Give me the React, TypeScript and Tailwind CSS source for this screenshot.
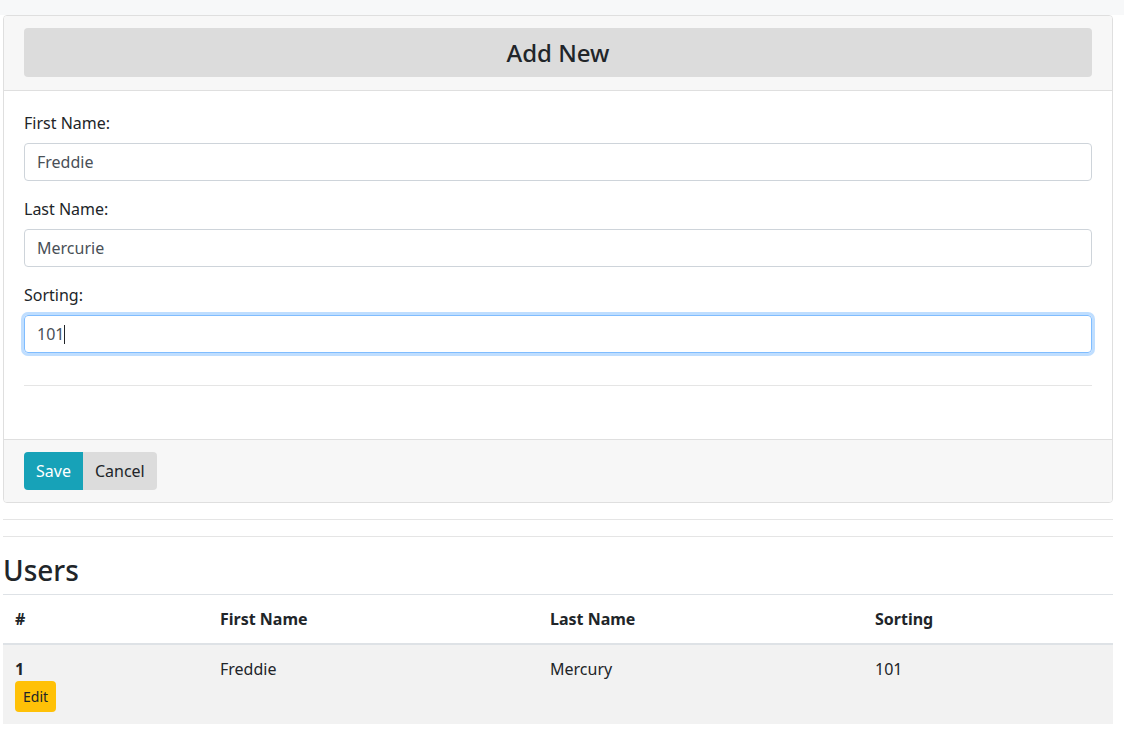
import React from 'react';

const font = { fontFamily: '"Noto Sans", "Open Sans", sans-serif' };

function Field({ label, value, focused }: { label: string; value: string; focused?: boolean }) {
  return (
    <div className="mb-4">
      <label className="block mb-2 text-[16px] leading-6 text-[#212529]">{label}</label>
      {focused ? (
        <div className="h-[38px] w-full rounded border border-[#80bdff] shadow-[0_0_0_3px_rgba(0,123,255,0.25)] px-3 flex items-center text-[16px] text-[#495057]">
          <span>{value}</span>
          <span className="inline-block w-px h-[19px] bg-[#212529]" />
        </div>
      ) : (
        <input
          readOnly
          defaultValue={value}
          className="block h-[38px] w-full rounded border border-[#ced4da] px-3 text-[16px] text-[#495057] outline-none"
        />
      )}
    </div>
  );
}

export default function App() {
  return (
    <div className="min-h-screen bg-white text-[#212529]" style={font}>
      <div className="h-[15px] bg-[#f7f8f9]" />
      <div className="ml-[3px] w-[1110px]">
        {/* Add New card */}
        <section className="rounded border border-[#dfdfdf] overflow-hidden">
          <header className="bg-[#f7f7f7] border-b border-[#dfdfdf] px-5 pt-3 pb-[13px]">
            <div className="h-[49px] rounded bg-[#dcdcdc] flex items-center justify-center">
              <h4 className="text-[24px] font-medium leading-none">Add New</h4>
            </div>
          </header>
          <div className="px-5 pt-5 pb-[53px]">
            <Field label="First Name:" value="Freddie" />
            <Field label="Last Name:" value="Mercurie" />
            <Field label="Sorting:" value="101" focused />
            <hr className="mt-8 border-t border-[#e5e5e5]" />
          </div>
          <footer className="bg-[#f7f7f7] border-t border-[#dfdfdf] px-5 py-3 flex">
            <button className="h-[38px] px-3 rounded-l bg-[#17a2b8] text-white text-[16px]">Save</button>
            <button className="h-[38px] px-3 rounded-r bg-[#dcdcdc] text-[#212529] text-[16px]">Cancel</button>
          </footer>
        </section>

        <hr className="mt-4 border-t border-[#e5e5e5]" />
        <hr className="mt-4 border-t border-[#e5e5e5]" />

        {/* Users table */}
        <h3 className="mt-[15px] text-[28px] font-medium leading-[36px] mb-[6px]">Users</h3>
        <table className="w-full border-collapse text-[16px] text-left">
          <thead>
            <tr className="border-t border-[#dee2e6] border-b-2">
              <th className="w-[205px] px-3 py-3 font-bold leading-6">#</th>
              <th className="w-[330px] px-3 py-3 font-bold leading-6">First Name</th>
              <th className="w-[325px] px-3 py-3 font-bold leading-6">Last Name</th>
              <th className="px-3 py-3 font-bold leading-6">Sorting</th>
            </tr>
          </thead>
          <tbody>
            <tr className="bg-[#f2f2f2] align-top">
              <td className="px-3 py-3 leading-6">
                <div className="font-bold">1</div>
                <button className="h-[31px] px-2 rounded bg-[#ffc107] text-[14px] text-[#212529]">Edit</button>
              </td>
              <td className="px-3 py-3 leading-6">Freddie</td>
              <td className="px-3 py-3 leading-6">Mercury</td>
              <td className="px-3 py-3 leading-6">101</td>
            </tr>
          </tbody>
        </table>
      </div>
    </div>
  );
}
